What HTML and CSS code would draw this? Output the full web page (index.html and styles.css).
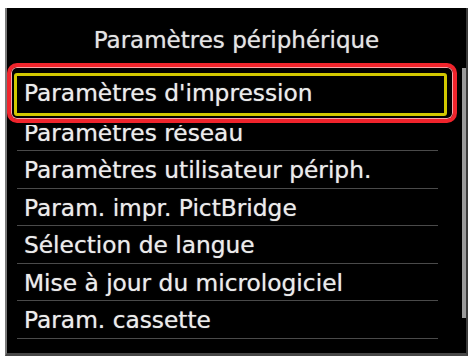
FILE: index.html
```html
<!DOCTYPE html>
<html lang="fr">
<head>
<meta charset="utf-8">
<title>Paramètres périphérique</title>
<link rel="stylesheet" href="styles.css">
</head>
<body>
<div class="panel">
  <div class="title">Paramètres périphérique</div>
  <ul class="list">
    <li class="row selected">Paramètres d'impression</li>
    <li class="row">Paramètres réseau</li>
    <li class="row">Paramètres utilisateur périph.</li>
    <li class="row">Param. impr. PictBridge</li>
    <li class="row">Sélection de langue</li>
    <li class="row">Mise à jour du micrologiciel</li>
    <li class="row">Param. cassette</li>
  </ul>
  <div class="scroll-thumb"></div>
</div>
</body>
</html>
```

FILE: styles.css
```css
html, body {
  margin: 0;
  padding: 0;
  background: #ffffff;
}

.panel {
  position: relative;
  box-sizing: border-box;
  margin: 8px 0 0 5px;
  width: 463px;
  height: 348px;
  background: #000000;
  border-left: 2px solid #7a7a7a;
  border-right: 2px solid #3a3a3a;
  border-bottom: 3px solid #484848;
  font-family: "DejaVu Sans", "Liberation Sans", sans-serif;
  color: #ececec;
  overflow: hidden;
  text-shadow: 0 0 1px rgba(255, 255, 255, 0.6);
}

.title {
  box-sizing: border-box;
  height: 68px;
  padding-top: 19px;
  line-height: 26px;
  font-size: 23px;
  text-align: center;
  color: #e4e4e4;
}

.list {
  list-style: none;
  margin: 0;
  padding: 0;
}

.row {
  position: relative;
  box-sizing: border-box;
  height: 37.5px;
  line-height: 38px;
  margin: 0 28px 0 10px;
  padding-left: 7px;
  border-bottom: 1px solid #4a4a4a;
  font-size: 23.3px;
  white-space: nowrap;
}

.selected {
  line-height: 33px;
}

.selected::before {
  content: "";
  position: absolute;
  z-index: 2;
  box-sizing: border-box;
  left: -10px;
  top: -13.5px;
  width: 450px;
  height: 60px;
  border: 4px solid #f0242c;
  border-radius: 10px;
  box-shadow: inset 0 0 0 1px #f7a4a8, 0 2px 0 #000000;
}

.selected::after {
  content: "";
  position: absolute;
  z-index: 2;
  box-sizing: border-box;
  left: -3px;
  top: -3.5px;
  width: 433px;
  height: 43.5px;
  border: 3px solid #d2c800;
  border-radius: 3px;
}

.scroll-thumb {
  position: absolute;
  right: 0;
  top: 60px;
  width: 4px;
  height: 250px;
  background: #9a9a9a;
}
```
